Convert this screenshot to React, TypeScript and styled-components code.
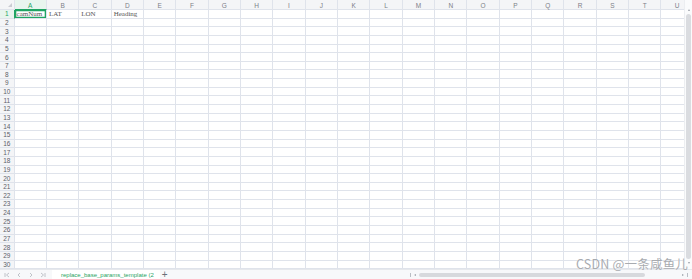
import React from 'react';
import styled, { createGlobalStyle } from 'styled-components';

const GlobalStyle = createGlobalStyle`
  html, body {
    margin: 0;
    padding: 0;
    background: #ffffff;
  }
  body {
    font-family: "Liberation Sans", Arial, sans-serif;
  }
`;

const COLS = 'ABCDEFGHIJKLMNOPQRSTU'.split('');
const ROWS = Array.from({ length: 30 }, (_, i) => i + 1);
const GREEN = '#1fa463';
const LINE = '#dfe3eb';

const Frame = styled.div`
  position: relative;
  width: 692px;
  height: 279px;
  overflow: hidden;
  background: #fff;
`;

const Main = styled.div`
  display: flex;
  height: 269px;
`;

const GridArea = styled.div`
  width: 684px;
  height: 269px;
  overflow: hidden;
`;

const Grid = styled.div`
  display: grid;
  grid-template-columns: 14.6px repeat(21, 32.35px);
  grid-template-rows: 10px repeat(30, 8.65px);
  width: max-content;
`;

const Corner = styled.div`
  position: relative;
  background: #f4f5f7;
  border-right: 1px solid ${LINE};
  border-bottom: 1px solid ${LINE};
  box-sizing: border-box;

  &::after {
    content: '';
    position: absolute;
    right: 2px;
    bottom: 2px;
    border-left: 4px solid transparent;
    border-bottom: 4px solid #c9ccd2;
  }
`;

const ColHead = styled.div<{ $active?: boolean }>`
  display: flex;
  align-items: center;
  justify-content: center;
  box-sizing: border-box;
  padding-top: 1px;
  font-size: 6.5px;
  color: ${(p) => (p.$active ? GREEN : '#7d8088')};
  background: ${(p) => (p.$active ? '#e8f5ee' : '#f4f5f7')};
  border-right: 1px solid ${LINE};
  border-bottom: 1px solid ${(p) => (p.$active ? GREEN : LINE)};
`;

const RowHead = styled.div<{ $active?: boolean }>`
  display: flex;
  align-items: center;
  justify-content: center;
  box-sizing: border-box;
  padding-top: 1.5px;
  font-size: 6.5px;
  line-height: 1;
  color: ${(p) => (p.$active ? GREEN : '#5c6068')};
  background: ${(p) => (p.$active ? '#e8f5ee' : '#f4f5f7')};
  border-right: 1px solid ${(p) => (p.$active ? GREEN : LINE)};
  border-bottom: 1px solid ${LINE};
`;

const Cell = styled.div<{ $selected?: boolean }>`
  box-sizing: border-box;
  border-right: 1px solid ${LINE};
  border-bottom: 1px solid ${LINE};
  font-family: "Liberation Serif", "Times New Roman", serif;
  font-size: 7px;
  line-height: 9px;
  color: #555;
  padding-left: 2px;
  white-space: nowrap;
  overflow: visible;
  ${(p) =>
    p.$selected &&
    `
    box-shadow: inset 0 0 0 1.3px ${GREEN};
    position: relative;
    z-index: 1;
  `}
`;

const VScroll = styled.div`
  width: 8px;
  height: 269px;
  background: #fafbfc;
  border-left: 1px solid #eceef1;
  box-sizing: border-box;
`;

const VScrollInner = styled.div`
  display: flex;
  flex-direction: column;
  align-items: center;
  height: 100%;
  padding: 9px 0 5px;
  box-sizing: border-box;
`;

const Arrow = styled.div<{ $dir: 'up' | 'down' | 'left' | 'right' }>`
  width: 0;
  height: 0;
  ${(p) =>
    p.$dir === 'up'
      ? 'border-left: 1.5px solid transparent; border-right: 1.5px solid transparent; border-bottom: 2px solid #9aa0a8;'
      : p.$dir === 'down'
      ? 'border-left: 1.5px solid transparent; border-right: 1.5px solid transparent; border-top: 2px solid #9aa0a8;'
      : p.$dir === 'left'
      ? 'border-top: 1.5px solid transparent; border-bottom: 1.5px solid transparent; border-right: 2px solid #9aa0a8;'
      : 'border-top: 1.5px solid transparent; border-bottom: 1.5px solid transparent; border-left: 2px solid #9aa0a8;'}
`;

const VThumb = styled.div`
  width: 5px;
  flex: 1;
  margin: 3px 0;
  background: #dadce0;
  border-radius: 3px;
`;

const BottomBar = styled.div`
  display: flex;
  align-items: center;
  height: 10px;
  background: #f7f8fa;
  border-top: 1px solid #e6e8ec;
  box-sizing: border-box;
`;

const NavGroup = styled.div`
  display: flex;
  align-items: center;
  gap: 6px;
  padding-left: 4px;
  width: 52px;
  box-sizing: border-box;
`;

const NavIcon = styled.svg`
  width: 6px;
  height: 6px;
  fill: none;
  stroke: #b9bdc4;
  stroke-width: 0.9;
`;

const Tab = styled.div`
  display: flex;
  align-items: center;
  height: 10px;
  padding: 0 6px 0 9px;
  background: #fff;
  color: ${GREEN};
  font-size: 6px;
  white-space: nowrap;
`;

const AddTab = styled.span`
  font-size: 10px;
  line-height: 1;
  color: #6a6f78;
  margin-left: 2px;
`;

const HScroll = styled.div`
  margin-left: auto;
  width: 284px;
  display: flex;
  align-items: center;
  gap: 3px;
  padding: 0 4px 0 2px;
  box-sizing: border-box;
`;

const Grip = styled.span`
  width: 1px;
  height: 4px;
  background: #b9bdc4;
`;

const HThumb = styled.div`
  width: 226px;
  height: 4px;
  background: #d7d9dd;
  border-radius: 3px;
`;

const Spacer = styled.div`
  flex: 1;
`;

const Watermark = styled.div`
  position: absolute;
  left: 576px;
  top: 258px;
  font-family: "Noto Sans CJK SC", "Liberation Sans", sans-serif;
  font-size: 12.5px;
  line-height: 1;
  color: #a8abb0;
  letter-spacing: 0.2px;
  white-space: nowrap;
  text-shadow: 0 0 1px #fff;
`;

const cellText: Record<string, string> = {
  A1: 'camNum',
  B1: 'LAT',
  C1: 'LON',
  D1: 'Heading',
};

const navPaths = [
  'M1 1v4M5 1L2.5 3L5 5',
  'M4 1L2 3L4 5',
  'M2 1L4 3L2 5',
  'M1 1L3.5 3L1 5M5 1v4',
];

export default function App() {
  return (
    <Frame>
      <GlobalStyle />
      <Main>
        <GridArea>
          <Grid>
            <Corner />
            {COLS.map((c) => (
              <ColHead key={c} $active={c === 'A'}>
                {c}
              </ColHead>
            ))}
            {ROWS.map((r) => (
              <React.Fragment key={r}>
                <RowHead $active={r === 1}>{r}</RowHead>
                {COLS.map((c) => (
                  <Cell key={c + r} $selected={c === 'A' && r === 1}>
                    {cellText[c + r]}
                  </Cell>
                ))}
              </React.Fragment>
            ))}
          </Grid>
        </GridArea>
        <VScroll>
          <VScrollInner>
            <Arrow $dir="up" />
            <VThumb />
            <Arrow $dir="down" />
          </VScrollInner>
        </VScroll>
      </Main>
      <BottomBar>
        <NavGroup>
          {navPaths.map((d) => (
            <NavIcon key={d} viewBox="0 0 6 6">
              <path d={d} />
            </NavIcon>
          ))}
        </NavGroup>
        <Tab>replace_base_params_template (2</Tab>
        <AddTab>+</AddTab>
        <Spacer />
        <HScroll>
          <Grip />
          <Arrow $dir="left" />
          <HThumb />
          <Spacer />
          <Arrow $dir="right" />
          <Grip />
        </HScroll>
      </BottomBar>
      <Watermark>CSDN @一条咸鱼儿</Watermark>
    </Frame>
  );
}
